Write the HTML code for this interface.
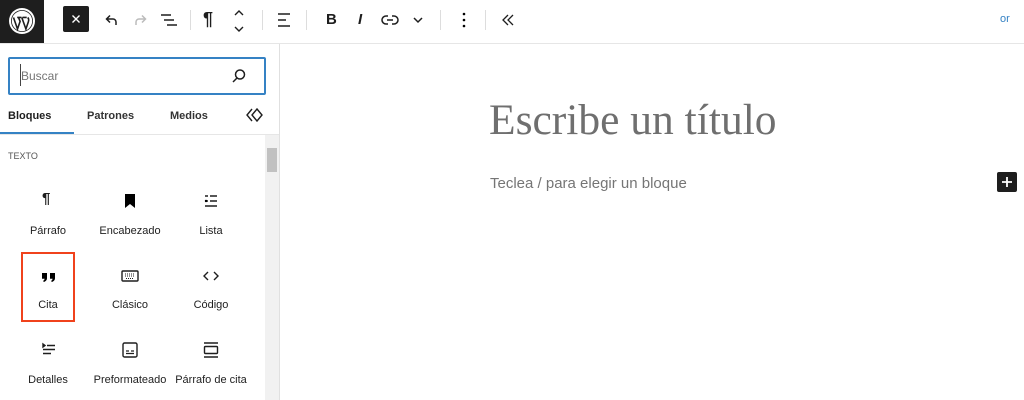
<!DOCTYPE html>
<html><head><meta charset="utf-8"><style>
*{margin:0;padding:0;box-sizing:border-box}
body{width:1024px;height:400px;overflow:hidden;background:#fff;font-family:"Liberation Sans",sans-serif;position:relative;color:#1e1e1e}
.a{position:absolute}
svg{display:block}
.lbl{position:absolute;font-size:11px;color:#1e1e1e;text-align:center;width:90px}
.ic{position:absolute;width:24px;height:24px}
</style></head><body>
<div class="a" style="left:0;top:0;width:44px;height:43px;background:#1e1e1e"></div>
<svg class="a" style="left:8px;top:7px" width="28" height="28" viewBox="0 0 28 28"><circle cx="14" cy="14" r="13" fill="#fff"/><circle cx="14" cy="14" r="11" fill="#1e1e1e"/><circle cx="14" cy="14" r="10.2" fill="#fff"/><path d="M5.5 10.5l4 11.5 2.6-7.6-1.6-4h-1.3M9.5 10.4h4M14.5 10.4h4.2M13.8 10.5l4.1 11.5 2.4-7c.8-2.2.3-3.6-.6-4.5M19 10.5" stroke="#1e1e1e" stroke-width="1.6" fill="none"/></svg>
<div class="a" style="left:0;top:43px;width:1024px;height:1px;background:#e6e6e6"></div>
<div class="a" style="left:63px;top:6px;width:26px;height:26px;background:#1e1e1e;border-radius:2px"></div>
<svg class="a" style="left:71px;top:14px" width="10" height="10"><path d="M1.5 1.5l7 7M8.5 1.5l-7 7" stroke="#fff" stroke-width="1.4"/></svg>
<svg class="a" style="left:102px;top:10px" width="20" height="20"><path d="M14 15v-3a3 3 0 0 0-3-3H5M8 5.5L4.5 9 8 12.5" stroke="#1e1e1e" stroke-width="1.5" fill="none"/></svg>
<svg class="a" style="left:130px;top:10px" width="20" height="20"><path d="M6 15v-3a3 3 0 0 1 3-3h6M12 5.5L15.5 9 12 12.5" stroke="#bbb" stroke-width="1.5" fill="none"/></svg>
<svg class="a" style="left:160px;top:10px" width="20" height="20"><path d="M1 5h10M4 10h10M7 15h10" stroke="#1e1e1e" stroke-width="1.5"/></svg>
<div class="a" style="left:190px;top:10px;width:1px;height:20px;background:#ddd"></div>
<div class="a" style="left:203px;top:9px;font-size:18px;font-weight:bold">¶</div>
<svg class="a" style="left:230px;top:6px" width="18" height="30"><path d="M5 9l4-4 4 4M5 21l4 4 4-4" stroke="#1e1e1e" stroke-width="1.4" fill="none"/></svg>
<div class="a" style="left:262px;top:10px;width:1px;height:20px;background:#ddd"></div>
<svg class="a" style="left:276px;top:10px" width="20" height="20"><path d="M2 4h12M2 10h8M2 16h12" stroke="#1e1e1e" stroke-width="1.5"/></svg>
<div class="a" style="left:306px;top:10px;width:1px;height:20px;background:#ddd"></div>
<div class="a" style="left:326px;top:11px;font-size:15px;font-weight:bold">B</div>
<div class="a" style="left:358px;top:11px;font-size:15px;font-style:italic;font-weight:bold">I</div>
<svg class="a" style="left:380px;top:10px" width="20" height="20"><path d="M8 6H6a4 4 0 0 0 0 8h2M12 6h2a4 4 0 0 1 0 8h-2M7 10h6" stroke="#1e1e1e" stroke-width="1.5" fill="none"/></svg>
<svg class="a" style="left:410px;top:12px" width="16" height="16"><path d="M4 6l4 4 4-4" stroke="#1e1e1e" stroke-width="1.5" fill="none"/></svg>
<div class="a" style="left:440px;top:10px;width:1px;height:20px;background:#ddd"></div>
<svg class="a" style="left:456px;top:10px" width="16" height="20"><circle cx="8" cy="4" r="1.3"/><circle cx="8" cy="10" r="1.3"/><circle cx="8" cy="16" r="1.3"/></svg>
<div class="a" style="left:485px;top:10px;width:1px;height:20px;background:#ddd"></div>
<svg class="a" style="left:500px;top:10px" width="16" height="20"><path d="M8 5l-5 5 5 5M13 5l-5 5 5 5" stroke="#1e1e1e" stroke-width="1.3" fill="none"/></svg>
<div class="a" style="left:1000px;top:13px;font-size:11px;color:#3582c4">or</div>
<div class="a" style="left:279px;top:44px;width:1px;height:356px;background:#e0e0e0"></div>
<div class="a" style="left:8px;top:57px;width:258px;height:38px;border:2px solid #3582c4;border-radius:2px"></div>
<div class="a" style="left:20px;top:64px;width:1px;height:22px;background:#444"></div>
<div class="a" style="left:21px;top:69px;font-size:12px;color:#757575">Buscar</div>
<svg class="a" style="left:230px;top:67px" width="18" height="18"><circle cx="10" cy="7.5" r="4.5" stroke="#1e1e1e" stroke-width="1.5" fill="none"/><path d="M7 11l-4 4" stroke="#1e1e1e" stroke-width="1.5"/></svg>
<div class="a" style="left:8px;top:110px;font-size:11px;font-weight:bold">Bloques</div>
<div class="a" style="left:87px;top:110px;font-size:11px;font-weight:bold;color:#333">Patrones</div>
<div class="a" style="left:170px;top:110px;font-size:11px;font-weight:bold;color:#333">Medios</div>
<svg class="a" style="left:246px;top:106px" width="22" height="18"><path d="M6 3l-5 6 5 6M11 3l5 6-5 6-5-6z" stroke="#1e1e1e" stroke-width="1.4" fill="none"/></svg>
<div class="a" style="left:0;top:132px;width:74px;height:2px;background:#3582c4"></div>
<div class="a" style="left:0;top:134px;width:279px;height:1px;background:#e6e6e6"></div>
<div class="a" style="left:265px;top:135px;width:14px;height:265px;background:#f1f1f1"></div>
<div class="a" style="left:267px;top:148px;width:10px;height:24px;background:#c1c1c1"></div>
<div class="a" style="left:8px;top:151px;font-size:9px;color:#555">TEXTO</div>
<div class="a" style="left:42px;top:190px;font-size:15px;font-weight:bold">¶</div>
<svg class="ic" style="left:118px;top:189px"><path d="M7 5h10v14l-5-4-5 4z"/></svg>
<svg class="ic" style="left:199px;top:189px"><path d="M6 7h3M11 7h7M6 12h3M11 12h7M6 17h12" stroke="#1e1e1e" stroke-width="1.4"/><circle cx="7" cy="12" r="1.2"/></svg>
<div class="lbl" style="left:3px;top:225px">Párrafo</div>
<div class="lbl" style="left:85px;top:225px">Encabezado</div>
<div class="lbl" style="left:166px;top:225px">Lista</div>
<div class="a" style="left:21px;top:252px;width:54px;height:70px;border:2px solid #f0421c"></div>
<svg class="ic" style="left:37px;top:264px"><path d="M5 9h5v5c0 2-1 3-3 4l-1-1c1-.6 1.5-1.3 1.6-2.2H5zM13 9h5v5c0 2-1 3-3 4l-1-1c1-.6 1.5-1.3 1.6-2.2H13z"/></svg>
<svg class="ic" style="left:118px;top:264px"><rect x="4" y="7" width="16" height="10" rx="1" stroke="#1e1e1e" stroke-width="1.4" fill="none"/><path d="M7 10h10M7 12h10M8 14.5h8" stroke="#1e1e1e" stroke-width="1" stroke-dasharray="1 1"/></svg>
<svg class="ic" style="left:199px;top:264px"><path d="M9 8l-4 4 4 4M15 8l4 4-4 4" stroke="#1e1e1e" stroke-width="1.4" fill="none"/></svg>
<div class="lbl" style="left:3px;top:299px">Cita</div>
<div class="lbl" style="left:85px;top:299px">Clásico</div>
<div class="lbl" style="left:166px;top:299px">Código</div>
<svg class="ic" style="left:37px;top:338px"><path d="M6 6v3l2-1.5zM10 7.5h8M6 11.5h12M6 15.5h8" stroke="#1e1e1e" stroke-width="1.4"/></svg>
<svg class="ic" style="left:118px;top:338px"><rect x="5" y="5" width="14" height="14" rx="1.5" stroke="#1e1e1e" stroke-width="1.4" fill="none"/><path d="M8 13h3M13 13h3M8 15.5h8" stroke="#1e1e1e" stroke-width="1.2"/></svg>
<svg class="ic" style="left:199px;top:338px"><path d="M5 5h14M5 19h14" stroke="#1e1e1e" stroke-width="1.4"/><rect x="5.5" y="8.5" width="13" height="7" rx="1" stroke="#1e1e1e" stroke-width="1.4" fill="none"/></svg>
<div class="lbl" style="left:3px;top:374px">Detalles</div>
<div class="lbl" style="left:85px;top:374px">Preformateado</div>
<div class="lbl" style="left:166px;top:374px">Párrafo de cita</div>
<div class="a" style="left:489px;top:95px;font-family:'Liberation Serif',serif;font-size:43.5px;color:#6f6f6f">Escribe un título</div>
<div class="a" style="left:490px;top:175px;font-size:15px;color:#757575">Teclea / para elegir un bloque</div>
<div class="a" style="left:997px;top:172px;width:20px;height:20px;background:#1e1e1e;border-radius:2px"></div>
<svg class="a" style="left:1000px;top:175px" width="14" height="14"><path d="M7 2v10M2 7h10" stroke="#fff" stroke-width="1.8"/></svg>
</body></html>
